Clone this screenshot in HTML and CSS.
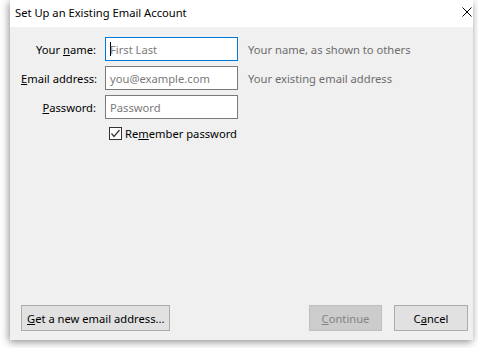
FILE: index.html
```html
<!DOCTYPE html>
<html lang="en">
<head>
    <meta charset="UTF-8">
    <title>Set Up an Existing Email Account</title>
    <link rel="stylesheet" href="styles.css">
</head>
<body>
    <div class="dialog">
        <div class="title-bar">
            <span class="title">Set Up an Existing Email Account</span>
            <svg class="close" width="10" height="10" viewBox="0 0 10 10">
                <path d="M0.5 0.5 L9.5 9.5 M9.5 0.5 L0.5 9.5" stroke="#000" stroke-width="1" fill="none"/>
            </svg>
        </div>

        <div class="content">
            <div class="form">
                <label class="field-label">Your <u>n</u>ame:</label>
                <div class="input focused"><span class="caret"></span><span class="placeholder">First Last</span></div>
                <span class="hint">Your name, as shown to others</span>

                <label class="field-label"><u>E</u>mail address:</label>
                <div class="input"><span class="placeholder">you@example.com</span></div>
                <span class="hint">Your existing email address</span>

                <label class="field-label"><u>P</u>assword:</label>
                <div class="input"><span class="placeholder">Password</span></div>
                <span></span>

                <div class="remember">
                    <span class="checkbox">
                        <svg width="11" height="11" viewBox="0 0 11 11">
                            <path d="M1.5 5.5 L4 8.5 L9.5 2" stroke="#333" stroke-width="1.2" fill="none"/>
                        </svg>
                    </span>
                    <span>Re<u>m</u>ember password</span>
                </div>
            </div>

            <div class="buttons">
                <button class="btn new-address"><u>G</u>et a new email address...</button>
                <div class="spacer"></div>
                <button class="btn disabled"><u>C</u>ontinue</button>
                <button class="btn cancel">C<u>a</u>ncel</button>
            </div>
        </div>
    </div>
</body>
</html>
```

FILE: styles.css
```css
body {
    margin: 0;
    padding: 0 5px 8px 10px;
    background: #ffffff;
    font-family: 'Noto Sans', 'Open Sans', sans-serif;
    font-size: 11.2px;
    color: #000;
    white-space: nowrap;
}

.dialog {
    width: 463px;
    height: 340px;
    display: flex;
    flex-direction: column;
    background: #f0f0f0;
    box-shadow: -1px 2px 8px rgba(0, 0, 0, 0.45);
}

.title-bar {
    height: 27px;
    background: #fff;
    display: flex;
    align-items: center;
    padding: 0 1px 0 5px;
}

.title {
    flex: 1;
    margin-top: -2px;
}

.close {
    margin-top: -3px;
}

.content {
    flex: 1;
    display: flex;
    flex-direction: column;
    padding: 10px 5px 9px 11px;
}

.form {
    display: grid;
    grid-template-columns: 75px 133px 1fr;
    column-gap: 9px;
    row-gap: 5px;
    align-items: center;
}

.form .hint {
    margin-left: 1px;
    color: #6d6d6d;
}

.field-label {
    text-align: right;
}

.input {
    height: 24px;
    box-sizing: border-box;
    border: 1px solid #7a7a7a;
    background: #fff;
    display: flex;
    align-items: center;
    padding-left: 4px;
}

.input.focused {
    border-color: #0078d7;
}

.caret {
    width: 1px;
    height: 14px;
    background: #000;
    margin-right: -1px;
}

.placeholder {
    color: #7a7a7a;
}

.remember {
    grid-column: 2 / 4;
    display: flex;
    align-items: center;
    gap: 3px;
    padding-left: 4px;
    margin-top: 2px;
}

.checkbox {
    width: 13px;
    height: 13px;
    box-sizing: border-box;
    border: 1px solid #333;
    background: #fff;
    display: flex;
    align-items: center;
    justify-content: center;
}

.buttons {
    margin-top: auto;
    display: flex;
    gap: 12px;
}

.spacer {
    flex: 1;
}

.btn {
    height: 26px;
    box-sizing: border-box;
    border: 1px solid #adadad;
    background: #e1e1e1;
    font-family: inherit;
    font-size: 11.2px;
    color: #000;
    padding: 0 5px;
}

.btn.new-address {
    width: 149px;
}

.btn.disabled {
    width: 73px;
    background: #cccccc;
    border-color: #bfbfbf;
    color: #838383;
}

.btn.cancel {
    width: 74px;
}
```
